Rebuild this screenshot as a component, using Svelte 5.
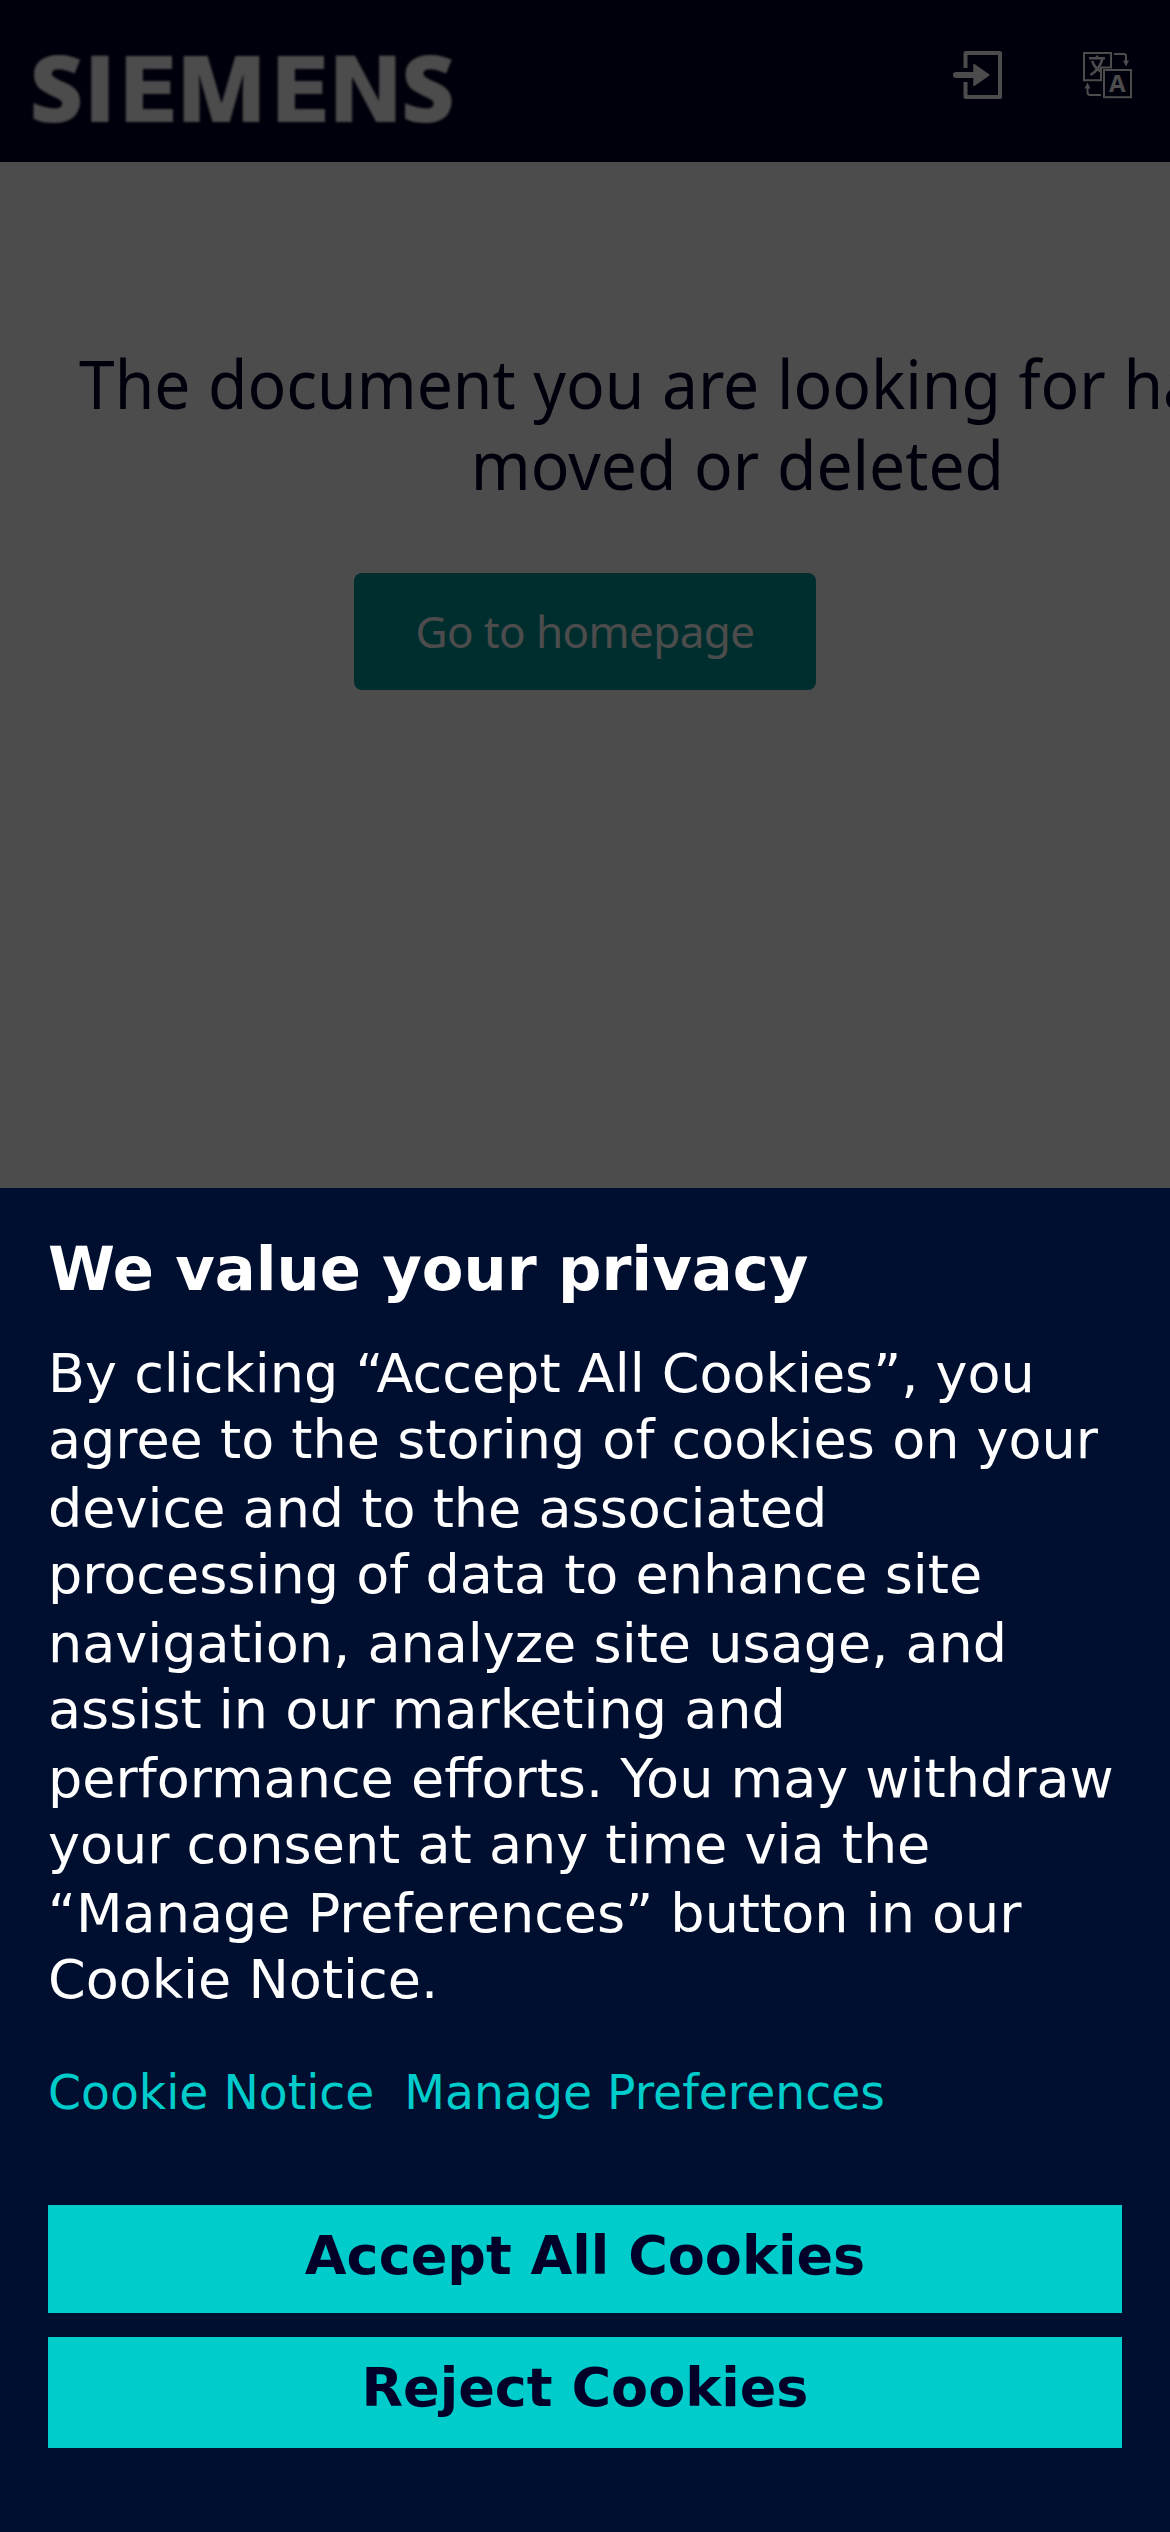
<script>
  const lines = [
    'By clicking “Accept All Cookies”, you',
    'agree to the storing of cookies on your',
    'device and to the associated',
    'processing of data to enhance site',
    'navigation, analyze site usage, and',
    'assist in our marketing and',
    'performance efforts. You may withdraw',
    'your consent at any time via the',
    '“Manage Preferences” button in our',
    'Cookie Notice.'
  ];
</script>

<div class="screen">
  <div class="page">
    <header>
      <svg class="logo" width="420" height="100" viewBox="33 30 420 100" role="img" aria-label="SIEMENS">
        <text y="121.5"><tspan class="round" x="29.5">S</tspan><tspan x="83 117.6">IE</tspan><tspan class="round" x="176.5">M</tspan><tspan x="269.6 327.6">EN</tspan><tspan class="round" x="401">S</tspan></text>
      </svg>
      <div class="actions">
        <svg width="52" height="52" viewBox="952 49 52 52">
          <path d="M965.5 68V53H1000V97H965.5V82" fill="none" stroke="#fff" stroke-width="4" stroke-linejoin="round" />
          <path d="M956 75H975" stroke="#fff" stroke-width="6" stroke-linecap="round" />
          <path d="M974 64.5L989 75L974 85.5Z" fill="#fff" stroke="#fff" stroke-width="1.5" stroke-linejoin="round" />
        </svg>
        <svg width="52" height="52" viewBox="1081 49 52 52" fill="none" stroke="#fff" stroke-width="2">
          <path d="M1101 80.2H1084V53H1111V67.5H1101Z" />
          <rect x="1104" y="70" width="27" height="27.2" />
          <path d="M1089 58.3H1105M1097 55.5V58.3M1102.5 58.3C1101 65 1097 71 1090.5 75M1092 61C1094 66 1097 69.5 1101 71.5" stroke-width="2.6" />
          <path d="M1114 54H1124Q1126 54 1126 56V62M1101 95H1090Q1087.5 95 1087.5 92V87" stroke-width="2" />
          <path d="M1123 60.5H1129L1126 66.5ZM1084.5 88.5H1090.5L1087.5 82.5Z" fill="#fff" stroke="none" />
          <text class="glyph" x="1117.2" y="92" text-anchor="middle">A</text>
        </svg>
      </div>
    </header>
    <main>
      <h1>The document you are looking for has been<br />moved or deleted</h1>
      <button class="home">Go to homepage</button>
    </main>
  </div>
  <div class="shade"></div>
  <section class="consent">
    <h2>We value your privacy</h2>
    <p>
      {#each lines as line}<span>{line}</span>{/each}
    </p>
    <nav><span>Cookie Notice</span><span>Manage Preferences</span></nav>
    <button class="choice accept">Accept All Cookies</button>
    <button class="choice reject">Reject Cookies</button>
  </section>
</div>

<style>
  :global(body) { margin: 0; background: #fff; }
  .screen { position: relative; width: 1170px; height: 2532px; overflow: hidden; display: flex; flex-direction: column; font-family: "DejaVu Sans", sans-serif; }
  .page { height: 1188px; flex: none; background: #fff; }
  .shade { position: absolute; inset: 0 0 auto; height: 1188px; background: rgba(0, 0, 0, 0.7); }
  header { box-sizing: border-box; height: 162px; padding: 30px 37px 0 33px; display: flex; justify-content: space-between; background: #000028; }
  .logo { overflow: visible; filter: blur(0.8px); font: 700 91px "DejaVu Sans", sans-serif; fill: #fff; }
  .round { font: 800 93px "Open Sans", sans-serif; }
  .actions { display: flex; gap: 77px; padding-top: 19px; }
  .glyph { font: 700 24px "Open Sans", sans-serif; fill: #fff; stroke: none; }
  main { display: flex; flex-direction: column; align-items: center; padding-top: 181px; }
  h1 { margin: 0 0 0 79px; width: 1376px; align-self: flex-start; text-align: center; white-space: nowrap; font: 400 67px/81px "Noto Sans", sans-serif; word-spacing: 1px; color: #000028; transform: scaleX(0.957); transform-origin: left; }
  button { border: 0; padding: 0; font: inherit; }
  .home { width: 462px; height: 117px; margin-top: 68px; border-radius: 8px; background: #009999; color: #fff; font: 400 44px/117px "Noto Sans", sans-serif; letter-spacing: -0.6px; }
  .consent { flex: 1; box-sizing: border-box; padding: 42px 48px 0; background: #000f2f; color: #fff; display: flex; flex-direction: column; }
  h2 { margin: 0 0 32px; font-size: 60.75px; line-height: 78px; font-weight: 700; }
  p { margin: 0; white-space: nowrap; font-size: 54px; line-height: 68px; }
  p span { display: block; height: 66px; }
  p span:nth-child(even) { height: 69px; }
  nav { margin-top: 48px; display: flex; gap: 30px; font-size: 47.25px; line-height: 60px; color: #00cccc; }
  .choice { display: flex; justify-content: center; align-items: flex-start; flex: none; background: #00cccc; color: #000028; font-weight: 700; font-size: 54px; line-height: 101px; }
  .accept { height: 108px; margin-top: 82px; }
  .reject { height: 111px; margin-top: 24px; }
</style>
